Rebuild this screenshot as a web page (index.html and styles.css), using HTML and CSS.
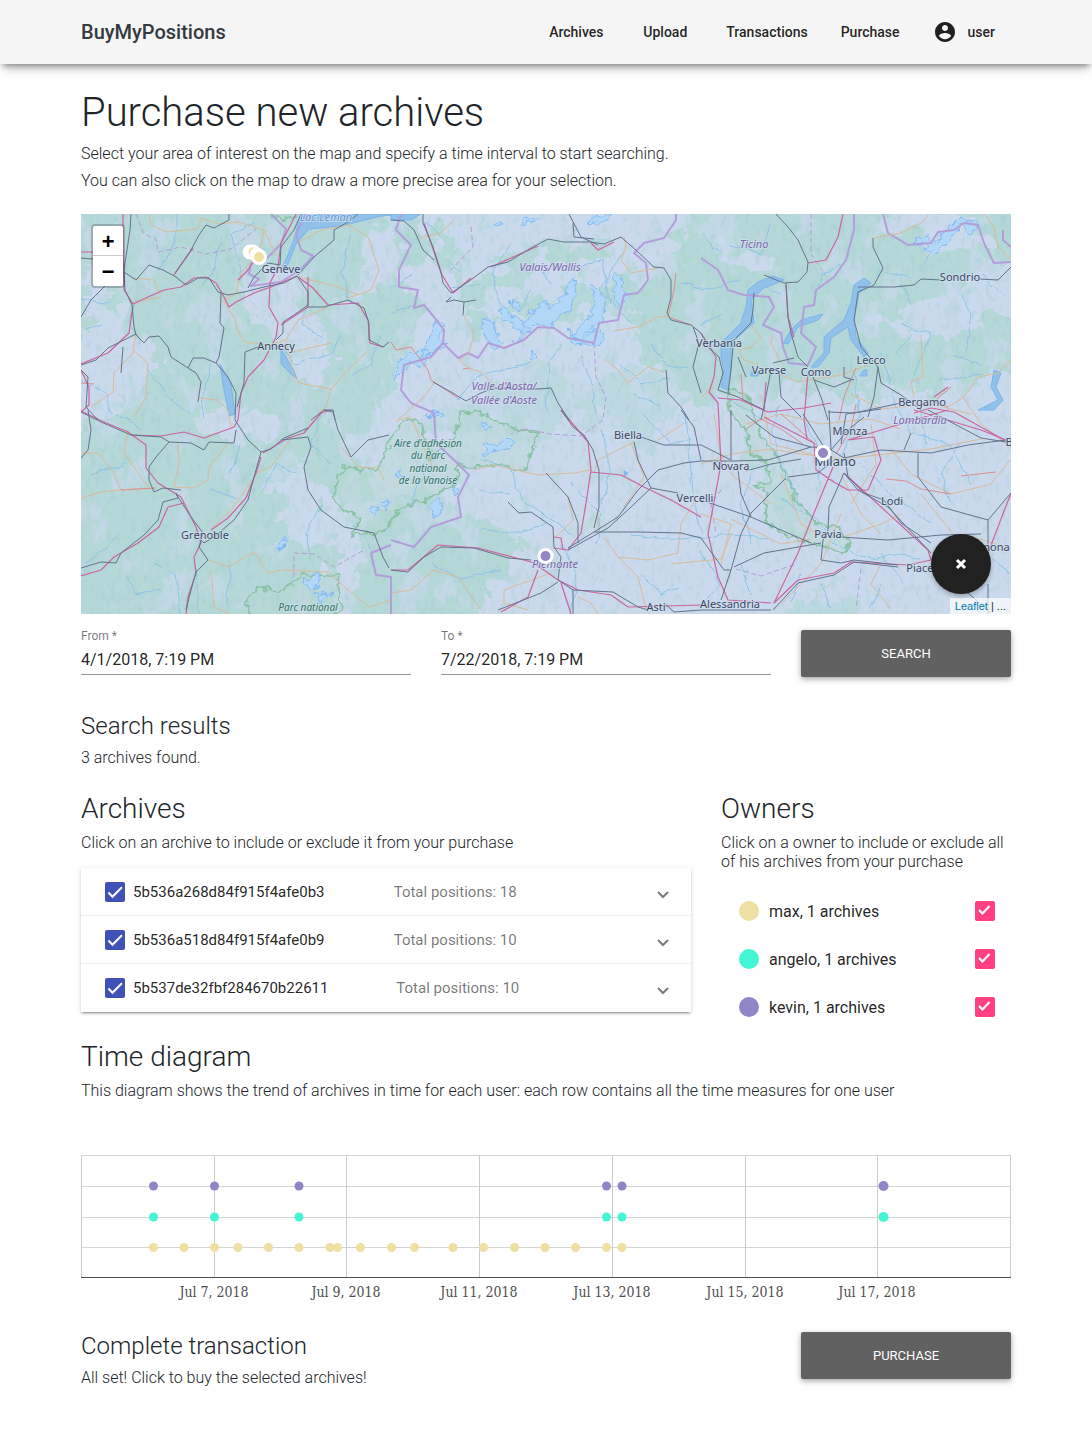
FILE: index.html
```html
<!DOCTYPE html>
<html lang="en">
<head>
<meta charset="utf-8">
<meta name="viewport" content="width=device-width, initial-scale=1">
<title>BuyMyPositions</title>
<link rel="stylesheet" href="styles.css">
</head>
<body>
<header class="topbar">
  <div class="container topbar-row">
    <a class="brand" href="#">BuyMyPositions</a>
    <nav class="nav">
      <a href="#">Archives</a>
      <a href="#">Upload</a>
      <a href="#">Transactions</a>
      <a href="#">Purchase</a>
      <a href="#" class="user"><svg width="24" height="24" viewBox="0 0 24 24" aria-hidden="true"><path fill="currentColor" d="M12 2C6.48 2 2 6.48 2 12s4.48 10 10 10 10-4.480 10-10S17.520 2 12 2zm0 3c1.660 0 3 1.340 3 3s-1.340 3-3 3-3-1.340-3-3 1.340-3 3-3zm0 14.200c-2.500 0-4.710-1.280-6-3.220.030-1.990 4-3.080 6-3.080 1.990 0 5.970 1.090 6 3.080-1.290 1.940-3.500 3.220-6 3.220z"/></svg>user</a>
    </nav>
  </div>
</header>

<main class="container">
  <h1>Purchase new archives</h1>
  <p>Select your area of interest on the map and specify a time interval to start searching.</p>
  <p>You can also click on the map to draw a more precise area for your selection.</p>

  <section class="map" aria-label="Map">
    <svg class="map-canvas" viewBox="0 0 930 400" preserveAspectRatio="xMidYMid slice">
      <defs>
        <filter id="ragged" x="-5%" y="-5%" width="110%" height="110%">
          <feTurbulence type="fractalNoise" baseFrequency=".04" numOctaves="4" seed="4"/>
          <feDisplacementMap in="SourceGraphic" scale="50" xChannelSelector="R" yChannelSelector="G"/>
        </filter>
        <filter id="wobble" x="-5%" y="-5%" width="110%" height="110%">
          <feTurbulence type="fractalNoise" baseFrequency=".07" numOctaves="2" seed="9"/>
          <feDisplacementMap in="SourceGraphic" scale="7" xChannelSelector="R" yChannelSelector="G"/>
        </filter>
        <filter id="crinkle" x="-5%" y="-5%" width="110%" height="110%">
          <feTurbulence type="fractalNoise" baseFrequency=".12" numOctaves="2" seed="2"/>
          <feDisplacementMap in="SourceGraphic" scale="11" xChannelSelector="R" yChannelSelector="G"/>
        </filter>
        <filter id="meadow" x="0" y="0" width="100%" height="100%" color-interpolation-filters="sRGB">
          <feTurbulence type="fractalNoise" baseFrequency=".035 .025" numOctaves="5" seed="12"/>
          <feColorMatrix values="0 0 0 0 .79  0 0 0 0 .855  0 0 0 0 .925  9 0 0 0 -5"/>
        </filter>
        <filter id="woods" x="0" y="0" width="100%" height="100%" color-interpolation-filters="sRGB">
          <feTurbulence type="fractalNoise" baseFrequency=".05 .04" numOctaves="4" seed="31"/>
          <feColorMatrix values="0 0 0 0 .7  0 0 0 0 .84  0 0 0 0 .84  8 0 0 0 -4.900"/>
        </filter>
        <filter id="relief" x="0" y="0" width="100%" height="100%" color-interpolation-filters="sRGB">
          <feTurbulence type="fractalNoise" baseFrequency=".2 .1" numOctaves="2" seed="7"/>
          <feColorMatrix values="0 0 0 0 .6  0 0 0 0 .76  0 0 0 0 .78  2 0 0 0 -1"/>
        </filter>
      </defs>

      <rect width="930" height="400" fill="#cadaec"/>
      <g filter="url(#ragged)" fill="#b5d7d8">
        <path d="M-20-20H320L350 30 320 70 345 100 320 150 300 200 270 230 290 270 250 320 260 420H-20V220L40 200 30 150-20 130Z"/>
        <path d="M345 10L370 60 390 90 460 50 540 40 530 25 450 35 390 65 365 10Z"/>
        <path d="M380 110L400 90 420 105 440 80 450 100 480 80 500 60 510 80 530 65 560 70 590 30 640-20H950V50L890 55 860 90 950 110V160L860 175 800 180 740 175 690 175 650 190 600 180 575 160 560 110 540 90 510 100 480 105 460 115 430 95 400 125Z"/>
        <path d="M290 290L360 280 400 310 450 325 440 350 400 375 380 410H270Z"/>
        <path d="M510 160L560 150 600 190 570 230 545 235 530 200 500 190 450 230 380 215 340 205 400 185 430 165 460 155Z" opacity=".6"/>
        <path d="M720 380L770 375 790 410H700Z" opacity=".7"/>
        <path d="M660 200L680 250 710 290 740 325 690 310 685 270 665 240Z" opacity=".6"/>
      </g>
      <g fill="#cadaec" filter="url(#ragged)">
        <path d="M0 60L35 75 45 120 80 140 60 180 20 190 0 150ZM160 65L210 60 220 100 250 150 230 170 180 120ZM290 15L310 10 320 60 280 80ZM630 30L700 35 690 60 650 55ZM790 105L850 90 900 100 880 120 810 125ZM800-5L900 0 905 35 850 40ZM190 265L230 250 270 320 220 345 200 310ZM110 200L180 190 200 215 150 230Z"/>
      </g>
      <rect width="930" height="400" filter="url(#meadow)" opacity=".65"/>
      <rect width="560" height="400" filter="url(#woods)" opacity=".5"/>
      <rect x="560" width="370" height="200" filter="url(#woods)" opacity=".45"/>
      <rect width="930" height="400" filter="url(#relief)" opacity=".4"/>

      <!-- protected areas -->
      <g filter="url(#crinkle)" fill="#b4d6d0" fill-opacity=".4" stroke="#8cc3a8" stroke-width="2">
        <path d="M310 223L297 254 277 255 263 253 250 280 263 297 280 302 270 322 300 318 320 295 345 285 375 270 378 249 385 256 413 250 440 258 450 240 458 218 430 215 405 200 380 197 371 230 350 245 340 210 325 202 318 215Z"/>
        <path d="M170 405L165 388 177 373 200 378 223 360 243 364 257 360 258 383 263 393 250 405Z"/>
        <path d="M647 175L665 180 680 220 697 246 707 263 717 290 737 310 757 313 770 330 760 339 737 330 707 323 683 306 687 276 672 272 690 267 683 246 670 240 665 216 650 200Z"/>
        <path d="M190 0L205 5 215 0"/>
      </g>

      <!-- rivers -->
      <g filter="url(#wobble)" fill="none" stroke="#8fc4e4" stroke-width="1">
        <path d="M95 0V30L78 55M140 25L130 60 120 70M160 60L150 20 175 10M55 85L50 110 60 130M65 155L90 185 110 200M130 150L120 190 122 205M200 130L215 150 250 140 260 120M225 90L220 110 245 125M270 20L260 60 270 90M30 90L0 85M20 110L0 118M270 160L290 150 300 120M240 200L230 230 250 250M0 165L25 180 30 200M35 200L60 215M5 350L40 320M45 360L55 380 80 375M75 350L95 360 100 400M10 260L45 250M160 230L150 260M130 275L155 285M115 350L118 400M150 350L145 390M180 280L195 250 215 260M240 290L225 320 230 345M285 320L295 360M330 290L345 250"/>
        <path d="M430 30L410 60 420 90M455 50L470 70M485 60L520 45 530 90M540 40L520 75 550 110M400 70L370 75M380 60L365 45M440 95L450 75M330 60L310 75M345 10L360 20M310 100L335 90M375 185L400 160 450 150M465 195L468 150 480 130M500 140L510 170 515 200M540 150L560 170 590 165M570 130L585 150 605 155M550 180L580 190M600 70L630 75 660 65M640 40L620 20M650 30L680 40 690 10M680 70L700 80M760 50L740 60 735 80M795 55L830 65M820 70L830 90M860 30L840 50M880 80L890 100 885 140M900 60L920 80M820 110L850 120 830 170M800 140L810 170M900 150L870 140M860 165L900 160"/>
        <path d="M400 245L430 255 440 285 470 305 490 320M397 275L430 280M465 310L430 320 400 315M350 350L380 365 420 355M520 215L530 260 520 290M490 270L520 300 515 330M605 200L612 280 620 320M550 320L600 325 650 320 690 325M480 330L495 360 490 400M560 200L590 230 610 225M670 260L660 290 670 330M690 215L700 250 720 290M720 200L735 230 740 270M770 150L780 200 760 240M810 180L830 220 870 230 890 270M840 200L845 230M780 250L810 280 850 310M700 285L735 305 755 325M750 330L790 345 820 340 840 345M620 335L640 370 620 390M660 350L670 380M720 360L710 390M740 370L750 395M800 370L790 395M880 230L860 260 870 290M700 190L690 215M650 185L680 205M830 120L815 140M800 340L825 370M560 360L580 380 600 375M640 100L620 110M880 320L930 360"/>
      </g>

      <!-- lakes -->
      <g fill="#91c1e8" stroke="#7bb4ec" stroke-width="1" stroke-linejoin="round">
        <path d="M220 0L212 28 204 48 200 55 206 52 215 30 228 15 260 12 300 2 330 0ZM139 150L150 170 154 200 148 202 142 170ZM200 135L212 155 216 165 210 160 200 150Z"/>
        <path d="M692 62L677 68 667 76 665 93 660 109 640 129 640 143 643 156 640 173 647 176 650 156 650 129 673 109 670 86 683 74 703 66Z"/>
        <path d="M783 64L773 71 770 89 763 106 743 123 743 139 730 153 737 153 748 139 750 124 767 113 770 126 783 143 787 139 775 123 773 106 778 79 790 69Z"/>
        <path d="M742 100L720 106 710 116 702 129 707 130 717 113 737 106ZM913 156L910 173 917 186 897 196 913 196 922 186 915 173 920 159Z"/>
        <path d="M310 0H340L330 6H310ZM670 158H677V162H670ZM783 156H786V162H778ZM543 257L547 259 544 262ZM198 330L203 323 205 332 198 337Z"/>
      </g>

      <!-- glaciers -->
      <g filter="url(#crinkle)" fill="#b2d7f6" stroke="#82b8f2" stroke-width="1">
        <path d="M418 90L428 100 440 106 450 115 440 120 430 108 420 100ZM432 85L438 92 435 98 431 93ZM402 108L412 105 416 125 425 130 415 134 404 122ZM448 100L455 96 460 88 470 92 485 80 492 62 494 80 488 98 478 100 470 112 455 110 446 120 434 128 440 118ZM510 72L518 76 524 90 521 108 512 116 502 128 490 120 508 104 512 90ZM535 58L542 66 540 74 548 80 538 92 532 76ZM485 115L500 126 512 112 524 122 518 130 495 132ZM356 104L362 112 358 124 364 130 350 138 340 145 350 120ZM330 140L340 134 350 142 340 154 330 150 320 158 312 165 318 148ZM505 10L515 3 530 0 525 6 510 12ZM444 4L455 2 452 8 442 9ZM412 12L420 8 418 14ZM450 138L455 142 452 146Z"/>
        <path d="M832 28L845 22 855 30 870 10 880 4 895 8 900 14 890 18 880 12 870 26 858 38ZM400 240L405 230 415 232 425 225 432 228 425 235 410 238ZM400 210L408 212 404 218ZM345 202L360 198 362 204ZM312 260L320 256 318 264ZM350 292L358 286 362 300 354 302ZM287 295L296 292 294 302ZM300 288L308 286 306 298ZM195 332L204 324 203 335ZM222 366L236 360 240 372 230 376ZM235 378L250 382 240 390ZM350 200L358 195 355 205ZM372 272L380 276 374 282Z"/>
      </g>

      <!-- administrative borders -->
      <g fill="none" stroke="#b29fd9" stroke-width="2" stroke-linejoin="round">
        <path d="M320 0L315 16 330 31 318 56 318 73 337 76 333 94 343 91 353 103 363 116 362 129 377 144 387 139 397 144 407 129 423 134 443 126 457 113 473 114 487 124 513 129 518 109 537 106 543 81 557 79 567 66 565 49 553 39 563 29 583 24 595 6V0"/>
        <path d="M362 129L350 143 323 151 320 176 330 189 353 199 355 229 373 246 388 261 377 283 380 303 350 313 333 333 310 326"/>
        <path d="M310 331L290 339 295 361 310 363V400"/>
        <path d="M620 44L637 56 647 76 663 81 688 83 693 93 682 111 700 119 702 133 708 149 727 151 735 133 720 119 723 93 733 91 735 76 753 63 765 46 773 16V0M802 0L807 19 827 31 850 29 857 18 873 16 883 9 897 11 903 29 913 49 930 48M922 16V26L930 33"/>
        <path d="M190 0L205 15 200 30 185 45 170 50 168 60 178 65 170 72 200 68 220 55 232 42 220 36 215 20 225 0"/>
      </g>
      <g fill="none" stroke="#b79ed6" stroke-width="1" stroke-dasharray="5 3">
        <path d="M55 0L63 20 75 25 77 38 100 33 125 40 150 35 175 15M513 129L515 163 525 183 522 206 500 222 470 220 445 215 430 220M390 13L392 33 370 56M213 363V339L233 340 253 353 283 336M730 0V40L745 62M640 276L630 290 635 320M655 355L680 362 715 350M780 355L775 395"/>
      </g>

      <!-- regional roads -->
      <g fill="none" stroke="#d9bb9b" stroke-width="1" stroke-linejoin="round">
        <path d="M68 0L70 11 85 18 117 15 120 4 137 10 157 8 183 16 195 42M183 16L178 39 160 59 155 80 142 86 153 103 158 119 163 128 188 131 205 126 217 106 247 93M205 126L212 159 218 169 250 175 267 156 288 136M55 119L52 139 33 159 32 178 10 193M52 136L67 149 65 183 53 203M117 184L137 186 147 196 150 215M218 28L240 16 267 11 287 23 298 56 290 76 267 84M218 63L257 73 277 81M207 139L250 129M52 64L73 66 80 83 53 88M250 175L245 193 237 199M0 284L20 278 40 276 70 274M0 239L17 239 33 259 40 276M47 216L43 239 67 273M97 229L98 249 93 273 113 274 127 266 128 253 147 229M210 224L190 253 177 258 150 296 132 313M127 346L147 353 173 338 187 359 200 356 247 358 267 376 288 393 310 386M130 356L133 393 147 400M260 233L277 253 297 254 303 266"/>
        <path d="M340 24L360 19 373 6M543 23L545 33 540 46 550 59 577 54M382 101L393 119 388 139 378 146 388 154 400 158 410 168 410 176M353 169L343 183 328 196 315 208M532 117L557 113 577 103 587 102M525 146L537 156 547 169 567 153 583 158M317 206L330 203 353 256M393 256L413 251 457 261 493 259 510 256M487 283L492 306 475 323M553 228L517 246 513 259M577 226L593 216 603 209M523 323L537 343 567 346 597 339 600 310 615 285M537 343L557 363 565 395M517 319V296M447 396L423 389V376L470 359M310 379L330 376 353 356 377 363 400 396M497 383L510 389 517 400M543 293L563 263 550 229M590 350L640 345 650 320"/>
        <path d="M792 24L820 19 840 9 847 1M903 0L913 13 917 33 930 46M657 136L663 146 677 151M670 111L680 124 670 133 658 136M692 121L690 129 697 143 700 149M700 161L717 168 760 161 787 151M840 121L842 163 830 168 833 183M930 146L917 159 897 163 883 183 867 193M620 183L633 173M620 250L650 240 690 235 720 240 760 245 850 235 900 225M665 210L700 200 740 210 790 205 820 215M770 180L800 195 850 190 890 200M700 260L720 310 745 325M760 260L780 300 800 320M810 235L830 260 870 280 910 270 930 245M650 305L700 330 730 325M765 322L800 310 820 300M650 260L690 290M620 300L650 310 640 350M860 330L900 325 930 335M700 390L740 350 760 300M800 350L790 370 810 395M840 280L880 330 910 333M633 200L640 240 650 260M680 180L690 230 730 240M790 210L795 250 770 290M880 180L900 210 925 230"/>
      </g>
      <g fill="none" stroke="#dc8f8d" stroke-width="1" stroke-linejoin="round">
        <path d="M310 128L315 136 330 133 347 156 350 166 377 184M388 154L382 155M595 59L593 76 587 103 610 111M775 154L763 183 758 206M700 200L740 235M755 240L770 215 775 190M805 265L825 267 840 275 870 280M867 193L850 186 840 190M880 262L915 258M40 276L75 274M0 169L13 170M870 173L855 186M665 215L680 205 700 215 722 230M660 160L662 185"/>
      </g>

      <!-- motorways -->
      <g fill="none" stroke="#cc659f" stroke-width="1.200" stroke-linejoin="round">
        <path d="M42 0V29L43 76 52 90 67 83 83 76 100 73 113 64 125 63 135 69 142 81 148 93 155 88 173 79 190 73 216 62M52 91L48 119 27 139 0 150M93 61L112 34M215 0L207 16 200 29 197 53 189 69 188 93 197 109 195 123 183 146 167 163 160 179 157 206 153 213 123 224 103 218 80 222 50 221M0 38H13M217 63L232 74 247 91 277 89 287 106 289 129 302 133M227 63V93L200 111M157 66L167 56 173 46M0 156L8 173V191L0 198"/>
        <path d="M0 197L23 208 47 218 65 231V254L77 269 100 283 115 313 120 329 113 343 115 359 107 383 105 400M182 239L207 224 223 219 240 199 250 196M180 243L175 259 165 284 147 304 130 316M103 289L87 293 78 313 57 329 33 343 20 356 0 362M343 9L350 29 360 59 372 79 390 64M410 53L457 32M510 29L517 36 533 28M727 49L745 46 757 23 762 0M705 71L707 103 713 123M620 119L635 143 633 163 628 178 637 189 640 250 627 320 637 363 647 386 690 389M637 184L660 186 687 198 723 194 750 189M685 168L683 196M727 159L723 206 726 225M833 199L850 194 873 198 925 227M867 173L853 183"/>
        <path d="M310 356L327 356 357 331 397 334 443 346 453 349 477 366 497 376 530 381 547 393 620 391M480 196L507 228 510 256 505 289 500 319 487 336 473 334M510 258L540 261 563 273 590 286 620 303M473 323L480 324 482 336M480 369L490 400M457 356L447 383 420 398M683 203L733 229M733 229L735 256 753 268 767 276 787 276 800 246 793 223 767 226M752 253L733 299 717 339 693 389 717 366 753 359 770 348 827 351 850 346M763 259L847 336 850 346M767 226L833 206 867 196M833 196L900 216 925 226M930 279L907 339 900 350"/>
      </g>

      <!-- railways -->
      <g fill="none" stroke="#64748c" stroke-width="1" stroke-linejoin="round">
        <path d="M50 0L49 16 43 56 44 76 51 91 53 113 55 121 63 129 68 123 78 122 87 133 90 143 107 154 112 144 123 144 135 149 147 163 155 179 154 206 167 226 180 238 190 235 203 224 227 214M0 151L15 146 27 134 43 126 55 120M43 58L55 66 68 51 82 56 95 63 105 71 117 64 128 64 137 78 147 81 163 78 183 73 203 69 216 62M94 59L110 36 118 21 125 11 133 14 148 6V0M220 0L213 16 200 33 199 51 187 49 173 63 167 74M216 62L227 78V91L213 101 202 108V119L195 126M227 93L243 93 267 86 283 94 288 109V126L302 133 308 128M140 79L139 109 143 114 138 143 135 149M164 138L177 133M164 138L163 169 156 193M217 61L233 43 253 26V16L267 8 277 0M0 44L12 45M0 103L10 86 25 71M0 156L7 163 5 193 17 206M107 154L115 159 120 168 117 188M230 206L243 196H252L254 206M42 133L40 159"/>
        <path d="M0 198L20 208 50 221 80 223 88 228 110 229 123 236 128 228 153 229 155 216M88 228L75 243 68 253V266L73 278 82 274 100 276M7 196L10 216 7 236 0 244M180 238L173 263 167 286 153 306 133 323 123 329 120 326M95 280L110 303 122 319 118 333 127 346 115 358 110 376 105 396M95 279L97 284 82 288 77 306 63 321 40 339 35 349 20 348 0 354M200 226L227 223 230 233 223 253 227 276 240 296 263 313 293 319 302 343 308 354M243 196L252 198 257 216 270 243 287 226 308 221"/>
        <path d="M310 6L323 7 333 16 342 36 353 46M342 0V9L352 33 360 58 362 69 370 79 387 68 407 53 427 48 450 34 467 25 483 28 510 28 523 30 540 23 557 38 573 53 583 54 590 66V83L586 99 590 106 610 111 620 119M488 0L500 23 517 31M492 9L493 23 513 25M370 83L365 88 373 86 383 88 395 86M383 88L382 101M612 113L618 129 612 153 620 179M585 156L587 179 600 193 608 206M352 168L370 178 385 187 400 179 413 174 457 175 470 174 477 189 488 206M695 0L707 13 717 26 727 48 726 58 717 68 703 69 683 61M705 69L707 103 710 119 717 143 727 153M673 79L672 96 670 109 653 126 643 129M793 71L802 54 792 33V24M793 71L777 78 773 106 780 133 797 153 800 169 820 181 840 196M777 73L813 73 833 71 840 65 860 66M898 65L917 66 930 53M620 119L627 133 638 143 642 159 637 176 657 183 683 196M652 133L650 156 647 179M657 143L665 163M692 149L713 144M698 159L700 183 720 203M690 156L683 193 680 206M732 163L740 183 747 206M733 166L753 173 770 166M797 153L793 183 787 203M747 198L773 199 820 189M763 153V163L773 166"/>
        <path d="M480 196L492 213 503 221 512 236 518 256V293L513 314M465 259L487 283 497 309V329M427 288L438 299 450 298 472 313 473 333 480 343 477 366 492 376 532 378 557 393 567 396M487 334L513 318 537 303 557 276 577 256 603 249 620 247 652 247 687 246 730 233 747 234 763 244 800 236 850 239 887 231 925 226M487 336L527 314 550 293 570 274 597 279M513 318L557 318 600 319 620 324 643 356 650 356 640 386M553 228L557 246 570 274M560 223L583 231 620 231 650 246M600 196L613 213 620 246M310 356L327 358 343 343 360 333 393 334 427 344 450 346M477 368L460 379 417 396M492 376V400M583 389L593 398 620 396 690 396"/>
        <path d="M650 196V246M722 200L743 233 750 239M665 201L693 223 730 233M748 196L750 236 767 216 783 203M707 263L737 259 753 246M705 264L670 299 660 320 650 356M620 286L670 303 730 329M657 256L660 280 670 303M763 239L767 263 783 279 803 286M763 259L777 276 807 293 850 339M803 286L820 309 850 329M763 259L748 293 747 316 742 326 740 346 760 349 773 346 817 351M740 329L683 339 653 353M760 323L807 326 860 321 900 320M830 219L823 236M837 239V263L860 293 907 306 930 279M907 306V336M692 396L717 369 753 361 773 348 817 353M887 379L910 399M907 370V400M847 196L900 224 925 228M720 245L690 250 665 257M760 230L765 200 800 195"/>
      </g>

      <!-- place names -->
      <g class="place">
        <text x="200" y="59">Genève</text><text x="195" y="136">Annecy</text><text x="124" y="325">Grenoble</text>
        <text x="879" y="67">Sondrio</text><text x="638" y="133">Verbania</text><text x="688" y="160">Varese</text>
        <text x="735" y="162">Como</text><text x="790" y="150">Lecco</text><text x="841" y="192">Bergamo</text>
        <text x="547" y="225">Biella</text><text x="769" y="221">Monza</text><text x="650" y="256">Novara</text>
        <text x="754" y="252" class="city">Milano</text><text x="614" y="288">Vercelli</text><text x="811" y="291">Lodi</text>
        <text x="747" y="324">Pavia</text><text x="575" y="397">Asti</text><text x="649" y="394">Alessandria</text>
        <text x="848" y="358">Piacenza</text><text x="905" y="337">Cremona</text><text x="928" y="232">B</text>
      </g>
      <g class="place region">
        <text x="469" y="57">Valais/Wallis</text><text x="423" y="176">Valle d'Aosta/</text><text x="423" y="190">Vallée d'Aoste</text>
        <text x="673" y="34">Ticino</text><text x="839" y="210">Lombardia</text><text x="474" y="354">Piemonte</text>
      </g>
      <g class="place park">
        <text x="347" y="233">Aire d'adhésion</text><text x="347" y="245">du Parc</text><text x="347" y="258">national</text><text x="347" y="270">de la Vanoise</text>
        <text x="227" y="397">Parc national</text>
      </g>
      <text class="place water" x="245" y="7">Lac Léman</text>

      <!-- archive positions -->
      <g stroke="#fff" stroke-width="3" fill="#eedfa3">
        <circle cx="169" cy="38" r="6" fill="#fff"/><circle cx="172" cy="38" r="6"/><circle cx="176" cy="41" r="6"/><circle cx="178" cy="43" r="6.500"/>
        <circle cx="464.500" cy="342" r="6.500" fill="#9185c6"/><circle cx="742" cy="239" r="6.500" fill="#9185c6"/>
      </g>
    </svg>
    <div class="zoom-control">
      <button type="button" aria-label="Zoom in">+</button>
      <button type="button" aria-label="Zoom out">−</button>
    </div>
    <div class="attribution"><a href="#">Leaflet</a> | ...</div>
    <button type="button" class="clear-area" aria-label="Clear selection"><svg width="12" height="12" viewBox="0 0 12 12"><path d="M2 2L10 10M10 2L2 10" stroke="#fff" stroke-width="3"/></svg></button>
  </section>

  <form class="search">
    <div class="field"><label for="from">From *</label><input id="from" type="text" value="4/1/2018, 7:19 PM"></div>
    <div class="field"><label for="to">To *</label><input id="to" type="text" value="7/22/2018, 7:19 PM"></div>
    <button type="button" class="action">SEARCH</button>
  </form>

  <section class="results">
    <h3>Search results</h3>
    <p>3 archives found.</p>
  </section>

  <div class="columns">
    <section>
      <h2>Archives</h2>
      <p>Click on an archive to include or exclude it from your purchase</p>
      <ul class="archives">
        <li><label><input type="checkbox" class="check" checked>5b536a268d84f915f4afe0b3</label><span class="total">Total positions: 18</span><svg class="chevron" viewBox="0 0 8 12"><path d="M-1 6L4 11 9 6"/></svg></li>
        <li><label><input type="checkbox" class="check" checked>5b536a518d84f915f4afe0b9</label><span class="total">Total positions: 10</span><svg class="chevron" viewBox="0 0 8 12"><path d="M-1 6L4 11 9 6"/></svg></li>
        <li><label><input type="checkbox" class="check" checked>5b537de32fbf284670b22611</label><span class="total">Total positions: 10</span><svg class="chevron" viewBox="0 0 8 12"><path d="M-1 6L4 11 9 6"/></svg></li>
      </ul>
    </section>
    <section>
      <h2>Owners</h2>
      <p>Click on a owner to include or exclude all of his archives from your purchase</p>
      <ul class="owners">
        <li><label><span class="dot max"></span>max, 1 archives<input type="checkbox" class="check accent" checked></label></li>
        <li><label><span class="dot angelo"></span>angelo, 1 archives<input type="checkbox" class="check accent" checked></label></li>
        <li><label><span class="dot kevin"></span>kevin, 1 archives<input type="checkbox" class="check accent" checked></label></li>
      </ul>
    </section>
  </div>

  <section class="timeline">
    <h2>Time diagram</h2>
    <p>This diagram shows the trend of archives in time for each user: each row contains all the time measures for one user</p>
    <svg class="chart" viewBox="0 0 930 150" role="img" aria-label="Archive positions over time">
      <path fill="none" stroke="#d4d4d4" d="M0 .5H930M0 31.500H930M0 62.500H930M0 92.500H930"/>
      <path fill="none" stroke="#ccc" d="M.5 0V122M133.500 0V122M265.500 0V122M398.500 0V122M531.500 0V122M664.500 0V122M796.500 0V122M929.500 0V122"/>
      <path stroke="#4d4d4d" d="M0 122.500H930"/>
      <g fill="#9185c6">
        <circle cx="72.500" cy="31" r="4.500"/><circle cx="133.500" cy="31" r="4.500"/><circle cx="218" cy="31" r="4.500"/><circle cx="525.500" cy="31" r="4.500"/><circle cx="541" cy="31" r="4.500"/><circle cx="802.500" cy="31" r="5"/>
      </g>
      <g fill="#43f5d3">
        <circle cx="72.500" cy="62" r="4.500"/><circle cx="133.500" cy="62" r="4.500"/><circle cx="218" cy="62" r="4.500"/><circle cx="525.500" cy="62" r="4.500"/><circle cx="541" cy="62" r="4.500"/><circle cx="802.500" cy="62" r="5"/>
      </g>
      <g fill="#eedfa3">
        <circle cx="72.500" cy="92.500" r="4.500"/><circle cx="103" cy="92.500" r="4.500"/><circle cx="133.500" cy="92.500" r="4.500"/><circle cx="157" cy="92.500" r="4.500"/><circle cx="187.500" cy="92.500" r="4.500"/><circle cx="218" cy="92.500" r="4.500"/><circle cx="249" cy="92.500" r="4.500"/><circle cx="256.500" cy="92.500" r="4.500"/><circle cx="279.500" cy="92.500" r="4.500"/><circle cx="310.500" cy="92.500" r="4.500"/><circle cx="333.500" cy="92.500" r="4.500"/><circle cx="372" cy="92.500" r="4.500"/><circle cx="402.500" cy="92.500" r="4.500"/><circle cx="433.500" cy="92.500" r="4.500"/><circle cx="464" cy="92.500" r="4.500"/><circle cx="494.500" cy="92.500" r="4.500"/><circle cx="525.500" cy="92.500" r="4.500"/><circle cx="541" cy="92.500" r="4.500"/>
      </g>
      <g class="axis">
        <text x="133" y="142">Jul 7, 2018</text><text x="265" y="142">Jul 9, 2018</text><text x="398" y="142">Jul 11, 2018</text><text x="531" y="142">Jul 13, 2018</text><text x="664" y="142">Jul 15, 2018</text><text x="796" y="142">Jul 17, 2018</text>
      </g>
    </svg>
  </section>

  <section class="complete">
    <div>
      <h3>Complete transaction</h3>
      <p>All set! Click to buy the selected archives!</p>
    </div>
    <button type="button" class="action">PURCHASE</button>
  </section>
</main>
</body>
</html>
```
FILE: styles.css
```css
* { box-sizing: border-box; }
body {
  margin: 0;
  background: #fff;
  color: #212529;
  font: 300 16px/19px Roboto, "Liberation Sans", sans-serif;
}
h1, h2, h3, p, ul { margin: 0; padding: 0; font-weight: 300; }
ul { list-style: none; }
a { color: inherit; text-decoration: none; }
button, input { font-family: inherit; }
h1 { font-size: 40px; line-height: 47px; }
h2 { font-size: 28px; line-height: 34px; }
h3 { font-size: 24px; line-height: 29px; }
p { margin-top: 8px; }
h2 + p, h3 + p { margin-top: 7px; }

.container { width: 100%; max-width: 960px; margin: 0 auto; padding: 0 15px; }
main.container { padding-top: 25px; padding-bottom: 46px; }

.topbar {
  background: #f5f5f5;
  box-shadow: 0 5px 5px -3px rgba(0,0,0,.2), 0 8px 10px -3px rgba(0,0,0,.2), 0 4px 8px -3px rgba(0,0,0,.2);
}
.topbar-row { display: flex; align-items: center; justify-content: space-between; height: 64px; }
.brand { font-size: 20px; font-weight: 500; color: #343a40; }
.nav { display: flex; gap: 1px; font-size: 14px; font-weight: 500; color: rgba(0,0,0,.87); }
.nav a { display: flex; align-items: center; justify-content: center; min-width: 88px; height: 36px; padding: 0 16px; }
.nav .user { gap: 11px; }

.map { position: relative; height: 400px; margin-top: 24px; overflow: hidden; }
.map-canvas { display: block; width: 100%; height: 100%; }
.place {
  font: 400 11px "Noto Sans", sans-serif;
  text-anchor: middle;
  fill: #3b4863;
  stroke: rgba(210,224,238,.7);
  stroke-width: 2px;
  paint-order: stroke;
}
.place .city { font-size: 13px; }
.region, .park, .water { font-style: italic; }
.region { fill: #7d68ab; }
.park { fill: #2f7562; font-size: 10px; }
.water { fill: #6a9cd6; }
.zoom-control {
  position: absolute; top: 10px; left: 10px;
  display: flex; flex-direction: column;
  width: 34px;
  border: 2px solid rgba(0,0,0,.2);
  border-radius: 4px;
  background-clip: padding-box;
}
.zoom-control button {
  height: 30px; padding: 6px 0 0; border: 0; border-radius: 0 0 2px 2px;
  background: #fff; color: #000;
  font: 700 22px/24px "Liberation Mono", monospace;
}
.zoom-control button:first-child { border-bottom: 1px solid #ccc; border-radius: 2px 2px 0 0; }
.attribution {
  position: absolute; right: 0; bottom: 0;
  padding: 0 5px;
  background: rgba(255,255,255,.7);
  color: #333;
  font: 400 11px/16px "Liberation Sans", sans-serif;
}
.attribution a { color: #0078a8; }
.clear-area {
  position: absolute; right: 20px; bottom: 20px;
  display: flex; align-items: center; justify-content: center;
  width: 60px; height: 60px; padding: 0;
  border: 0; border-radius: 50%;
  background: #212121;
  box-shadow: 0 2px 5px rgba(0,0,0,.3);
}

.search { display: grid; grid-template-columns: 11fr 11fr 7fr; gap: 30px; margin-top: 16px; align-items: start; }
.field { display: flex; flex-direction: column; }
.field label { font-size: 12px; font-weight: 400; line-height: 13px; color: rgba(0,0,0,.54); }
.field input {
  width: 100%; height: 32px; padding: 1px 0 0;
  border: 0; border-bottom: 1px solid #949494; border-radius: 0;
  background: none; color: rgba(0,0,0,.87); font-size: 16px;
}
.action {
  width: 100%; height: 47px; padding: 0;
  border: 0; border-radius: 2px;
  background: #616161; color: #fff; font-size: 13px;
  box-shadow: 0 2px 5px rgba(0,0,0,.26), 0 2px 8px rgba(0,0,0,.12);
}

.results { margin-top: 35px; }
.columns { display: grid; grid-template-columns: 61fr 29fr; gap: 30px; margin-top: 25px; }
.archives { margin-top: 16px; box-shadow: 0 3px 1px -2px rgba(0,0,0,.2), 0 2px 2px rgba(0,0,0,.14), 0 1px 5px rgba(0,0,0,.12); }
.archives li {
  display: flex; align-items: center; height: 48px; padding: 0 24px;
  font-size: 15px; font-weight: 400; color: rgba(0,0,0,.87);
}
.archives li + li { box-shadow: 0 -1px 1px #f0f0f0; }
.archives label { display: flex; align-items: center; gap: 8px; flex: 1 1 auto; margin-right: 6px; }
.total { flex: 2 1 auto; margin-right: 16px; color: rgba(0,0,0,.54); }
.chevron { width: 8px; height: 12px; overflow: visible; fill: none; stroke: #7b7b7b; stroke-width: 2; }
.check {
  appearance: none;
  width: 20px; height: 20px; margin: 0; border-radius: 2px;
  background: #3f51b5 url("data:image/svg+xml,%3Csvg xmlns='http://www.w3.org/2000/svg' viewBox='0 0 24 24'%3E%3Cpath d='M4.100 12.700L9 17.600 20.300 6.300' fill='none' stroke='%23fff' stroke-width='2.500'/%3E%3C/svg%3E");
}
.check.accent {
  margin-left: auto;
  background: #ff4081 url("data:image/svg+xml,%3Csvg xmlns='http://www.w3.org/2000/svg' viewBox='0 0 20 20'%3E%3Cpath d='M4 9L7.500 12.500 14.500 5' fill='none' stroke='%23fff' stroke-width='2'/%3E%3C/svg%3E");
}
.owners { margin-top: 16px; }
.owners label {
  display: flex; align-items: center; gap: 10px; height: 48px; padding: 0 16px 0 18px;
  font-weight: 400; color: rgba(0,0,0,.87);
}
.dot { width: 20px; height: 20px; border-radius: 50%; }
.dot.max { background: #eedfa3; }
.dot.angelo { background: #43f5d3; }
.dot.kevin { background: #9185c6; }

.timeline { margin-top: 9px; }
.chart { display: block; width: 100%; height: auto; margin-top: 55px; }
.axis { font: 400 14px "DejaVu Serif Condensed", "DejaVu Serif", serif; fill: #4d4d4d; text-anchor: middle; }

.complete { display: grid; grid-template-columns: 23fr 7fr; gap: 30px; margin-top: 27px; }
```
